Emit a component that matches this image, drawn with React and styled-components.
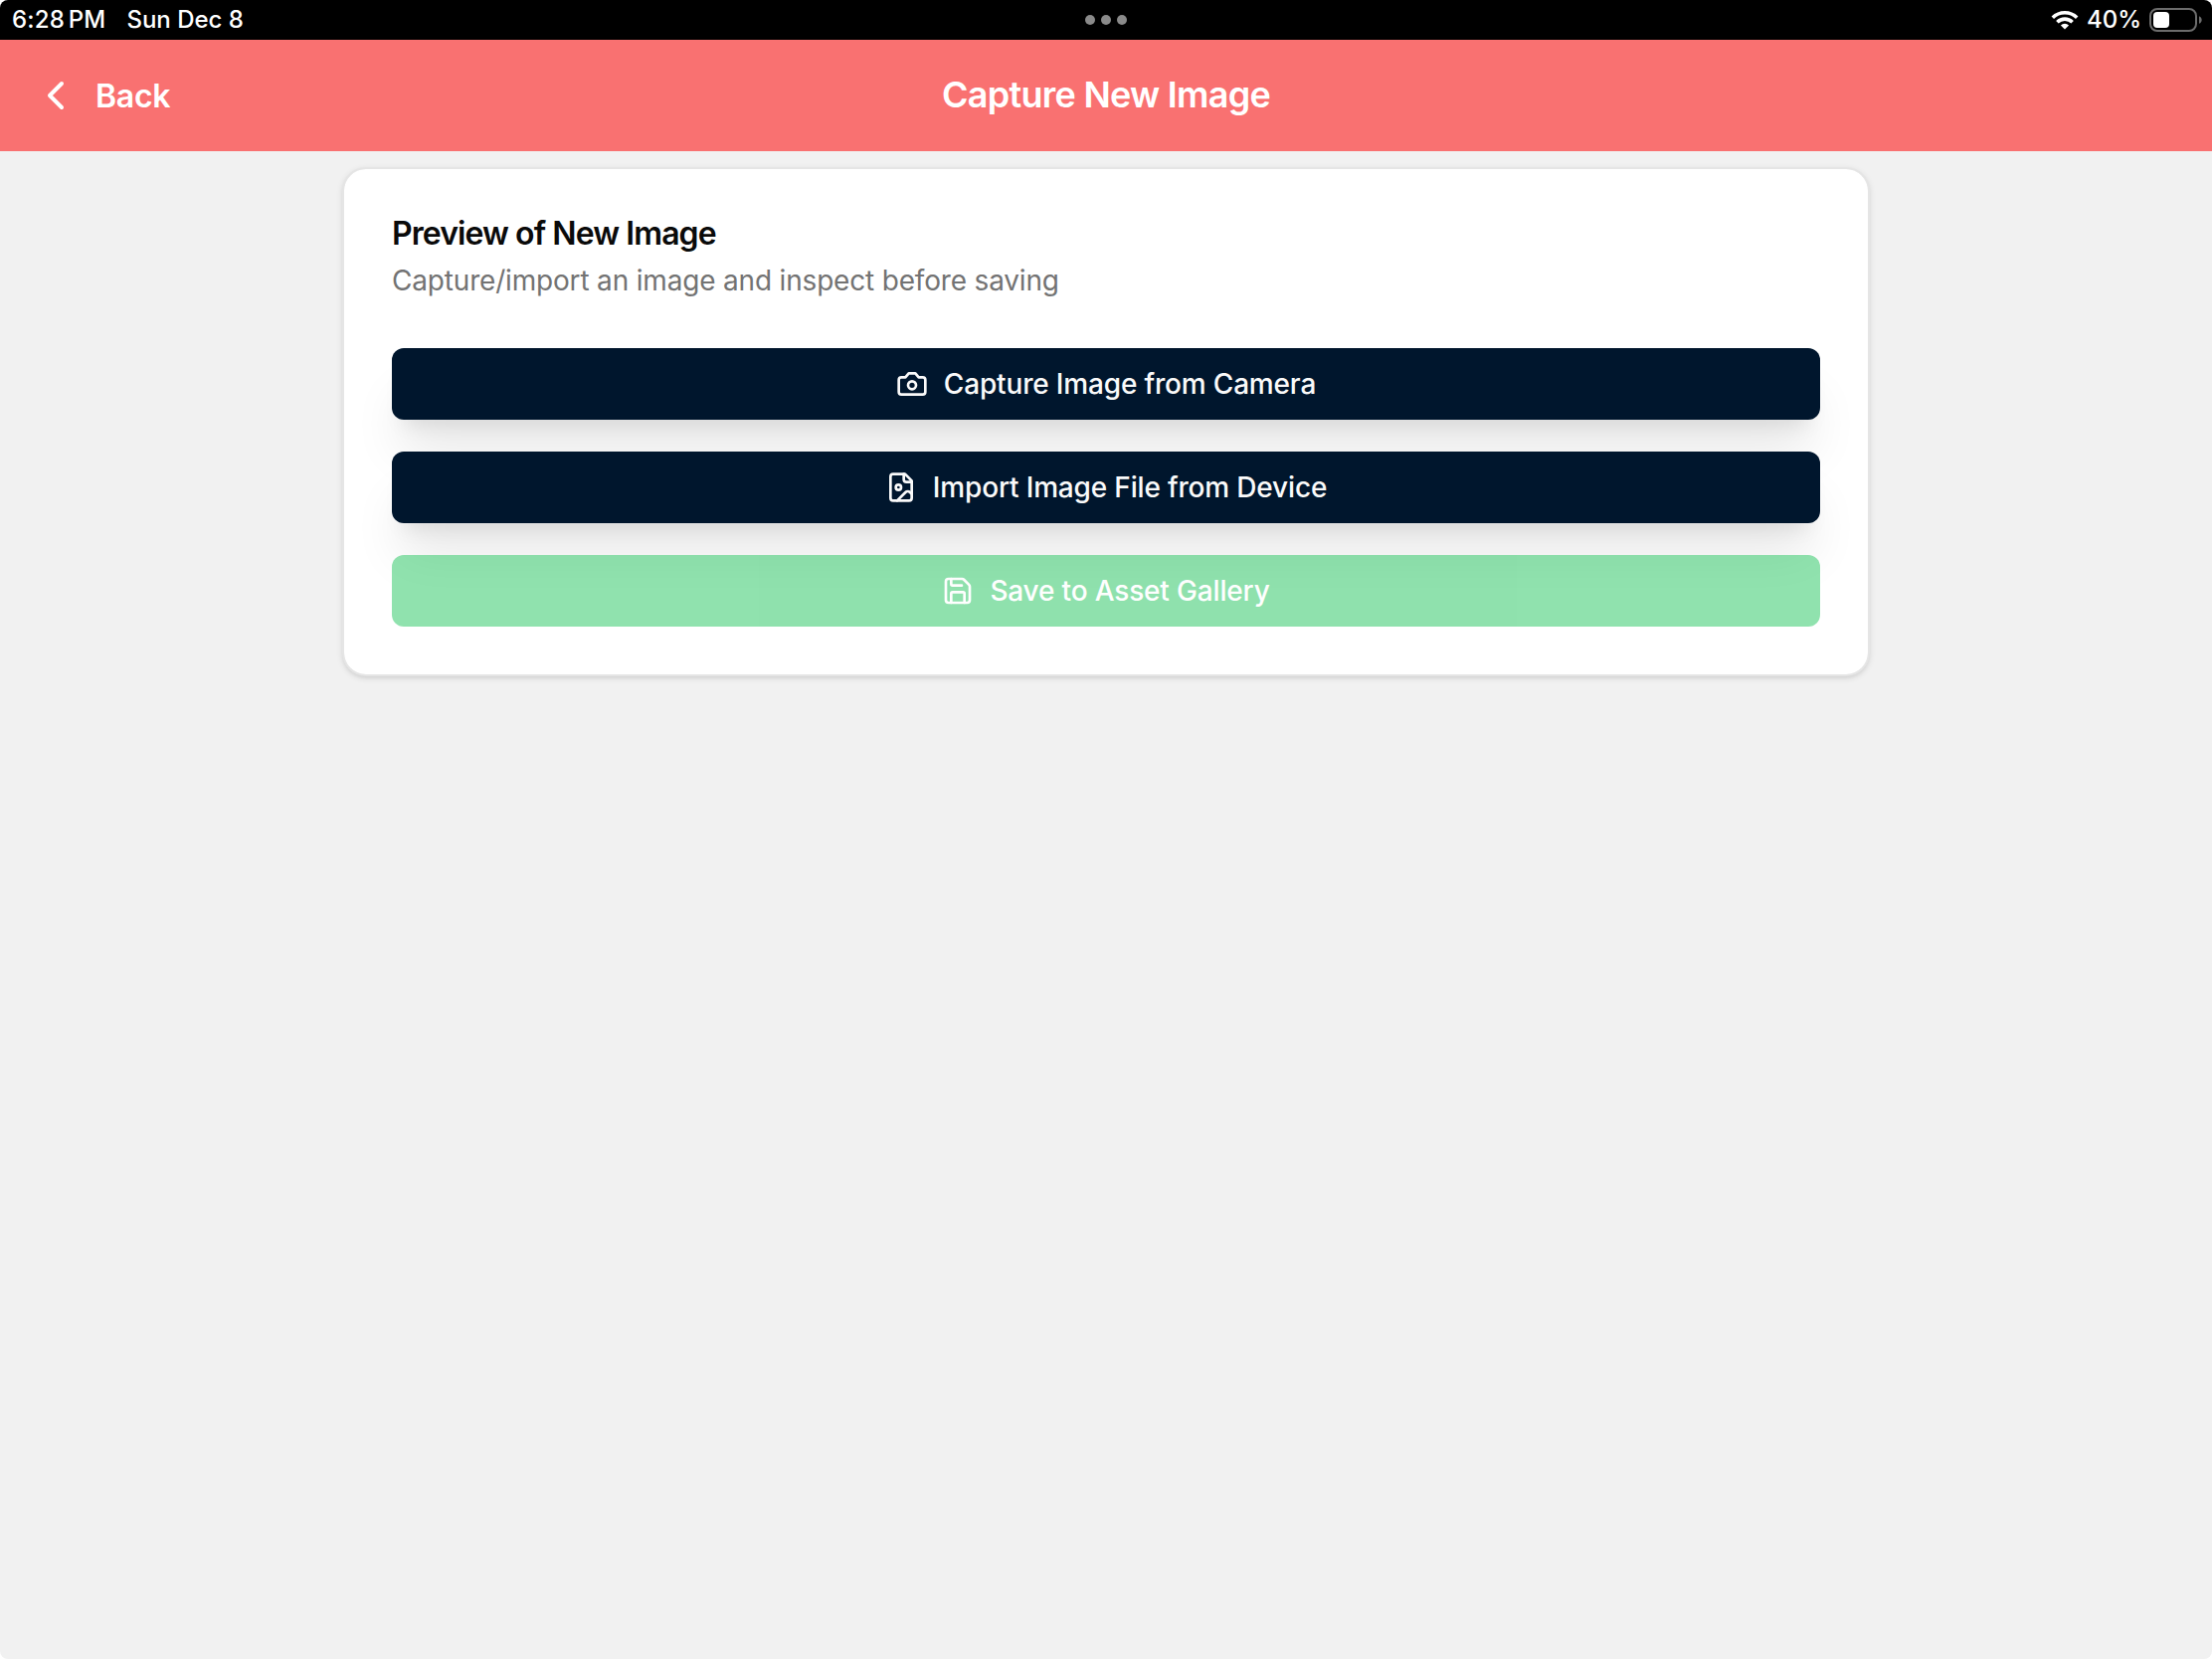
import React from "react";
import styled, { createGlobalStyle } from "styled-components";

const GlobalStyle = createGlobalStyle`
  * { box-sizing: border-box; }
  html { background: #fff; }
  body {
    margin: 0;
    font-family: Inter, "Liberation Sans", sans-serif;
    font-optical-sizing: none;
    -webkit-font-smoothing: antialiased;
  }
`;

const Screen = styled.div`
  min-height: 100vh;
  display: flex;
  flex-direction: column;
  overflow: hidden;
  border-radius: 8px;
  background: #f1f1f1;
`;

const StatusBar = styled.div`
  height: 40px;
  padding: 0 9px;
  display: grid;
  grid-template-columns: 1fr auto 1fr;
  align-items: center;
  background: #000;
  color: #fff;
  font-size: 24px;
  font-weight: 500;
  line-height: 40px;
`;

const StatusGroup = styled.div`
  display: flex;
  align-items: center;
  gap: ${({ $gap }) => $gap}px;
  padding-left: 3px;
  justify-content: ${({ $end }) => ($end ? "flex-end" : "flex-start")};
`;

const StatusText = styled.span`
  letter-spacing: ${({ $spacing }) => $spacing || 0}px;
  word-spacing: ${({ $word }) => $word || 0}px;
`;

const Dots = styled.div`
  display: flex;
  gap: 6px;
`;

const Dot = styled.i`
  width: 10px;
  height: 10px;
  border-radius: 50%;
  background: #8a8a8a;
`;

const Header = styled.header`
  height: 112px;
  padding: 0 40px;
  display: grid;
  grid-template-columns: 1fr auto 1fr;
  align-items: center;
  background: #f97171;
  color: #fff;
`;

const BackButton = styled.button`
  justify-self: start;
  display: flex;
  align-items: center;
  gap: 24px;
  padding: 0;
  border: 0;
  background: none;
  color: inherit;
  font: 600 32px/48px Inter, sans-serif;
  letter-spacing: -0.25px;
`;

const BackLabel = styled.span`
  padding-top: 2px;
`;

const Title = styled.h1`
  margin: 0;
  padding-bottom: 2px;
  font-size: 36px;
  line-height: 56px;
  font-weight: 600;
  letter-spacing: -0.73px;
`;

const Card = styled.main`
  width: 1536px;
  margin: 16px auto 0;
  padding: 48px;
  border: 2px solid #e5e5e5;
  border-radius: 24px;
  background: #fff;
  background-clip: padding-box;
  box-shadow: 0 2px 6px rgba(0, 0, 0, 0.1), 0 2px 4px -2px rgba(0, 0, 0, 0.1);
`;

const CardTitle = styled.h2`
  margin: 0;
  padding-top: 1px;
  font-size: 32px;
  line-height: 32px;
  font-weight: 600;
  letter-spacing: -0.92px;
  color: #0a0a0a;
`;

const CardText = styled.p`
  margin: 11px 0 0;
  font-size: 28px;
  line-height: 40px;
  letter-spacing: -0.18px;
  color: #737373;
`;

const Actions = styled.div`
  margin-top: 48px;
  display: flex;
  flex-direction: column;
  gap: 32px;
`;

const ActionButton = styled.button`
  height: 72px;
  display: flex;
  align-items: center;
  justify-content: center;
  gap: 16px;
  padding: 0;
  border: 0;
  border-radius: 12px;
  background: ${({ $green }) => ($green ? "#22c55e" : "#00162d")};
  opacity: ${({ $green }) => ($green ? 0.5 : 1)};
  color: ${({ $green }) => ($green ? "#fff" : "#fafafa")};
  font: 500 28px/40px Inter, sans-serif;
  letter-spacing: -0.17px;
  box-shadow: ${({ $green }) =>
    $green ? "none" : "0 40px 50px -10px rgba(0,0,0,.1), 0 16px 20px -12px rgba(0,0,0,.1)"};
`;

const Glyph = styled.svg`
  width: ${({ $w }) => $w}px;
  height: ${({ $h, $w }) => $h || $w}px;
  flex: none;
  fill: none;
  stroke: currentColor;
  stroke-width: ${({ $stroke }) => $stroke || 2};
  stroke-linecap: ${({ $cap }) => $cap || "round"};
  stroke-linejoin: round;
`;

const CameraIcon = () => (
  <Glyph $w={32} viewBox="0 0 24 24">
    <path d="M14.5 4h-5L7 7H4a2 2 0 0 0-2 2v9a2 2 0 0 0 2 2h16a2 2 0 0 0 2-2V9a2 2 0 0 0-2-2h-3l-2.5-3z" />
    <circle cx="12" cy="13" r="3" />
  </Glyph>
);

const FileImageIcon = () => (
  <Glyph $w={32} viewBox="0 0 24 24">
    <path d="M15 2H6a2 2 0 0 0-2 2v16a2 2 0 0 0 2 2h12a2 2 0 0 0 2-2V7Z" />
    <path d="M14 2v4a2 2 0 0 0 2 2h4" />
    <circle cx="10" cy="12" r="2" />
    <path d="m20 17-1.296-1.296a2.41 2.41 0 0 0-3.408 0L9 22" />
  </Glyph>
);

const SaveIcon = () => (
  <Glyph $w={32} viewBox="0 0 24 24">
    <path d="M15.2 3a2 2 0 0 1 1.4.6l3.8 3.8a2 2 0 0 1 .6 1.4V19a2 2 0 0 1-2 2H5a2 2 0 0 1-2-2V5a2 2 0 0 1 2-2z" />
    <path d="M17 21v-7a1 1 0 0 0-1-1H8a1 1 0 0 0-1 1v7" />
    <path d="M7 3v4a1 1 0 0 0 1 1h7" />
  </Glyph>
);

const ChevronIcon = () => (
  <Glyph $w={32} $stroke={4} viewBox="0 0 32 32">
    <path d="M22 4 10 16l12 12" />
  </Glyph>
);

const WifiIcon = () => (
  <Glyph $w={28} $h={20} $stroke={3.6} $cap="butt" viewBox="0 0 28 20">
    <path d="M1.8 7.7a17.4 17.4 0 0 1 24.4 0" />
    <path d="M6.4 12.3a10.8 10.8 0 0 1 15.2 0" />
    <path d="M14 19.6 9.9 15.5a5.9 5.9 0 0 1 8.2 0z" fill="currentColor" stroke="none" />
  </Glyph>
);

const Battery = () => (
  <Glyph $w={54} $h={24} viewBox="0 0 54 24">
    <rect x="1" y="1" width="46" height="22" rx="7" stroke="#6c6c6c" />
    <rect x="4" y="4" width="16" height="16" rx="4" fill="#fff" stroke="none" />
    <path d="M50 8.2c3.6 1.4 3.6 6.2 0 7.6z" fill="#6c6c6c" stroke="none" />
  </Glyph>
);

export default function App() {
  return (
    <Screen>
      <GlobalStyle />
      <StatusBar>
        <StatusGroup $gap={21}>
          <StatusText $spacing={0.2} $word={-3}>6:28 PM</StatusText>
          <StatusText>Sun Dec 8</StatusText>
        </StatusGroup>
        <Dots>
          <Dot />
          <Dot />
          <Dot />
        </Dots>
        <StatusGroup $end $gap={8}>
          <WifiIcon />
          <StatusText>40%</StatusText>
          <Battery />
        </StatusGroup>
      </StatusBar>
      <Header>
        <BackButton>
          <ChevronIcon />
          <BackLabel>Back</BackLabel>
        </BackButton>
        <Title>Capture New Image</Title>
      </Header>
      <Card>
        <CardTitle>Preview of New Image</CardTitle>
        <CardText>Capture/import an image and inspect before saving</CardText>
        <Actions>
          <ActionButton>
            <CameraIcon />
            Capture Image from Camera
          </ActionButton>
          <ActionButton>
            <FileImageIcon />
            Import Image File from Device
          </ActionButton>
          <ActionButton $green>
            <SaveIcon />
            Save to Asset Gallery
          </ActionButton>
        </Actions>
      </Card>
    </Screen>
  );
}
